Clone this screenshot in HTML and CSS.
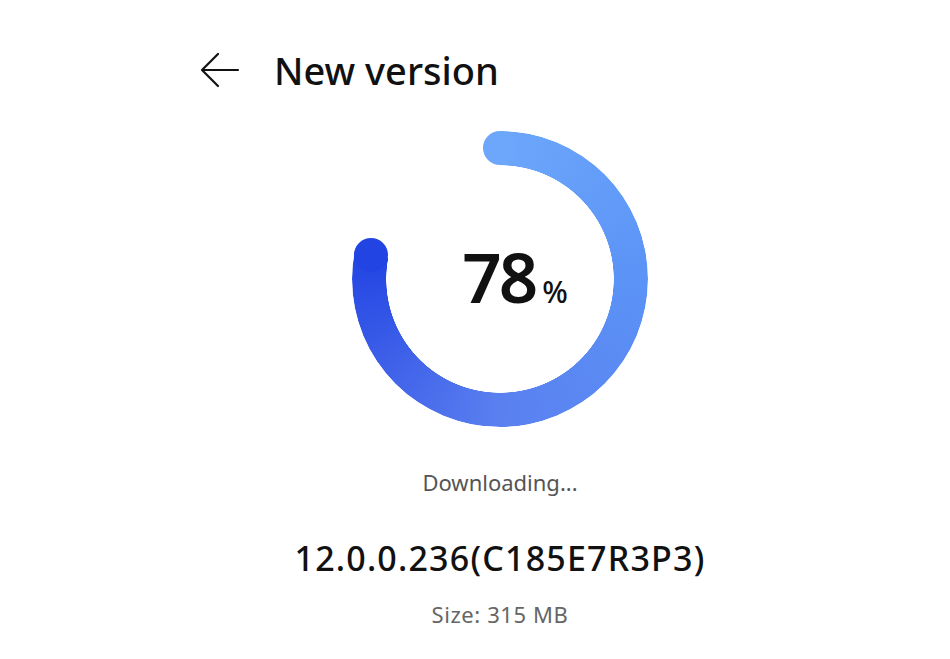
FILE: index.html
```html
<!DOCTYPE html>
<html lang="en">
<head>
<meta charset="UTF-8" />
<title>New version</title>
<link rel="stylesheet" href="styles.css">
</head>
<body>

<div class="page">
  <header class="topbar">
    <svg class="back" width="40" height="36" viewBox="0 0 40 36" fill="none" stroke="#111" stroke-width="2.2" stroke-linecap="round" stroke-linejoin="round">
      <path d="M38 18H3" />
      <path d="M18 2L2 18L18 34" />
    </svg>
    <h1>New version</h1>
  </header>

  <div class="progress">
    <div class="ring"></div>
    <span class="cap cap-start"></span>
    <span class="cap cap-end"></span>
    <div class="value"><span class="num">78</span><span class="pct">%</span></div>
  </div>

  <p class="status">Downloading...</p>
  <p class="version">12.0.0.236(C185E7R3P3)</p>
  <p class="size">Size: 315 MB</p>
</div>

</body>
</html>
```

FILE: styles.css
```css
body { margin: 0; background: #fff; color: #111; font-family: "Noto Sans", "Liberation Sans", sans-serif; }
.page { width: 900px; margin-left: 50px; display: flex; flex-direction: column; align-items: center; }

.topbar { align-self: stretch; display: flex; align-items: center; gap: 34px; padding: 51px 0 0 150px; height: 38px; }
.back { flex: none; }
.topbar h1 { margin: 0; font-size: 38px; font-weight: 500; line-height: 38px; }

.progress { position: relative; width: 296px; height: 296px; margin-top: 42px; display: grid; place-items: center; }
.ring {
  position: absolute; inset: 0; border-radius: 50%;
  background: conic-gradient(#6ca7fb 0deg, #5b93f6 90deg, #5a80f0 180deg, #3a5ce8 240deg, #2244e2 280.8deg, transparent 280.8deg);
  -webkit-mask: radial-gradient(circle closest-side, transparent 113.5px, #000 114px);
  mask: radial-gradient(circle closest-side, transparent 113.5px, #000 114px);
}
.cap { position: absolute; width: 34px; height: 34px; border-radius: 50%; }
.cap-start { left: 131px; top: 0; background: #6ca7fb; }
.cap-end { left: 2px; top: 107px; background: #2244e2; }

.value { position: relative; display: flex; align-items: baseline; padding-left: 30px; margin-top: -4px; }
.num { font-size: 69px; font-weight: 600; letter-spacing: -3px; line-height: 1; }
.pct { font-size: 30px; font-weight: 500; margin-left: 7px; }

.status { margin: 40px 0 0; font-size: 22px; color: #555; }
.version { margin: 38px 0 0; font-size: 34px; font-weight: 500; letter-spacing: 1.2px; }
.size { margin: 18px 0 0; font-size: 22px; color: #666; letter-spacing: 0.6px; }
```
